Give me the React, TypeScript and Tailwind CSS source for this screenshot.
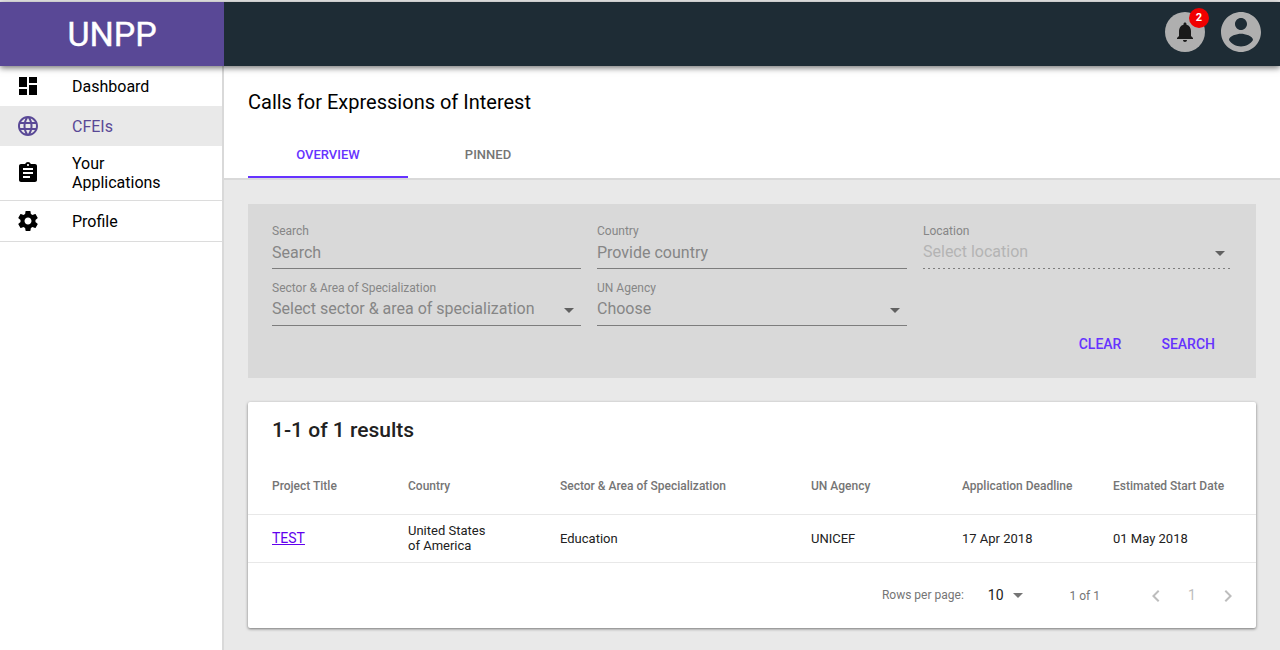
import type { ReactNode } from "react";

const PATHS = {
  dashboard: "M3 13h8V3H3v10zm0 8h8v-6H3v6zm10 0h8V11h-8v10zm0-18v6h8V3h-8z",
  language:
    "M11.99 2C6.47 2 2 6.48 2 12s4.47 10 9.99 10C17.52 22 22 17.52 22 12S17.52 2 11.99 2zm6.93 6h-2.95c-.32-1.25-.78-2.45-1.38-3.56 1.84.63 3.37 1.91 4.33 3.56zM12 4.04c.83 1.2 1.48 2.53 1.91 3.96h-3.82c.43-1.43 1.08-2.76 1.91-3.96zM4.26 14C4.1 13.36 4 12.69 4 12s.1-1.36.26-2h3.38c-.08.66-.14 1.32-.14 2 0 .68.06 1.34.14 2H4.26zm.82 2h2.95c.32 1.25.78 2.45 1.38 3.56-1.84-.63-3.37-1.9-4.33-3.56zm2.95-8H5.08c.96-1.66 2.49-2.93 4.33-3.56C8.81 5.55 8.35 6.75 8.03 8zM12 19.96c-.83-1.2-1.48-2.53-1.91-3.96h3.82c-.43 1.43-1.08 2.76-1.91 3.96zM14.34 14H9.66c-.09-.66-.16-1.32-.16-2 0-.68.07-1.35.16-2h4.68c.09.65.16 1.32.16 2 0 .68-.07 1.34-.16 2zm.25 5.56c.6-1.11 1.06-2.31 1.38-3.56h2.95c-.96 1.65-2.49 2.93-4.33 3.56zM16.36 14c.08-.66.14-1.32.14-2 0-.68-.06-1.34-.14-2h3.38c.16.64.26 1.31.26 2s-.1 1.36-.26 2h-3.38z",
  assignment:
    "M19 3h-4.18C14.4 1.84 13.3 1 12 1c-1.3 0-2.4.84-2.82 2H5c-1.1 0-2 .9-2 2v14c0 1.1.9 2 2 2h14c1.1 0 2-.9 2-2V5c0-1.1-.9-2-2-2zm-7 0c.55 0 1 .45 1 1s-.45 1-1 1-1-.45-1-1 .45-1 1-1zm2 14H7v-2h7v2zm3-4H7v-2h10v2zm0-4H7V7h10v2z",
  settings:
    "M19.43 12.98c.04-.32.07-.64.07-.98s-.03-.66-.07-.98l2.11-1.65c.19-.15.24-.42.12-.64l-2-3.46c-.12-.22-.39-.3-.61-.22l-2.49 1c-.52-.4-1.08-.73-1.69-.98l-.38-2.65C14.46 2.18 14.25 2 14 2h-4c-.25 0-.46.18-.49.42l-.38 2.65c-.61.25-1.17.59-1.69.98l-2.49-1c-.23-.09-.49 0-.61.22l-2 3.46c-.13.22-.07.49.12.64l2.11 1.65c-.04.32-.07.65-.07.98s.03.66.07.98l-2.11 1.65c-.19.15-.24.42-.12.64l2 3.46c.12.22.39.3.61.22l2.49-1c.52.4 1.08.73 1.69.98l.38 2.65c.03.24.24.42.49.42h4c.25 0 .46-.18.49-.42l.38-2.65c.61-.25 1.17-.59 1.69-.98l2.49 1c.23.09.49 0 .61-.22l2-3.46c.12-.22.07-.49-.12-.64l-2.11-1.65zM12 15.5c-1.93 0-3.5-1.57-3.5-3.5s1.57-3.5 3.5-3.5 3.5 1.57 3.5 3.5-1.57 3.5-3.5 3.5z",
  bell: "M12 22c1.1 0 2-.9 2-2h-4c0 1.1.89 2 2 2zm6-6v-5c0-3.07-1.64-5.64-4.5-6.32V4c0-.83-.67-1.5-1.5-1.5s-1.5.67-1.5 1.5v.68C7.63 5.36 6 7.92 6 11v5l-2 2v1h16v-1l-2-2z",
  caret: "M7 10l5 5 5-5z",
  left: "M15.41 7.41L14 6l-6 6 6 6 1.41-1.41L10.83 12z",
  right: "M10 6L8.59 7.41 13.17 12l-4.58 4.59L10 18l6-6z",
};

function Icon({ name, className = "size-6" }: { name: keyof typeof PATHS; className?: string }) {
  return (
    <svg viewBox="0 0 24 24" fill="currentColor" className={`shrink-0 ${className}`}>
      <path d={PATHS[name]} />
    </svg>
  );
}

function NavItem({ icon, active, children, className = "h-10" }: { icon: keyof typeof PATHS; active?: boolean; children: ReactNode; className?: string }) {
  return (
    <a className={`box-content flex items-center pl-4 ${active ? "bg-[#e9e9e9] text-[#594896]" : "text-black"} ${className}`}>
      <Icon name={icon} />
      <span className="ml-8 w-[110px] text-base leading-[19px]">{children}</span>
    </a>
  );
}

function Field({ label, placeholder, select, disabled }: { label: string; placeholder: string; select?: boolean; disabled?: boolean }) {
  return (
    <div className={`flex h-[57px] flex-col ${disabled ? "w-[309px]" : ""}`}>
      <div className="mt-[11px] h-4 text-xs leading-4 text-[#868686]">{label}</div>
      <div className={`flex h-[30px] justify-between border-b ${disabled ? "border-transparent text-[#b4b4b4]" : "border-[#7d7d7d] text-[#868686]"}`}>
        <span className={`text-base leading-5 ${select ? "pt-[3px]" : "pt-1"}`}>{placeholder}</span>
        {select && <Icon name="caret" className="mt-0.5 size-6 text-[#616161]" />}
      </div>
      {disabled && (
        <div className="-mt-px mr-0.5 h-px shrink-0 bg-[repeating-linear-gradient(to_right,#7d7d7d_0px,#7d7d7d_2px,transparent_2px,transparent_5px)]" />
      )}
    </div>
  );
}

const COLUMNS = ["Project Title", "Country", "Sector & Area of Specialization", "UN Agency", "Application Deadline", "Estimated Start Date"];
const GRID = "grid grid-cols-[136px_152px_251px_151px_151px_1fr] items-center border-b border-[#e8e8e8] pl-6";

export default function App() {
  return (
    <div className="flex h-[650px] w-[1280px] flex-col overflow-hidden bg-[#e9e9e9] pt-0.5 font-['Roboto',sans-serif] text-black">
      <header className="z-10 flex h-16 shrink-0 bg-[#1e2c35] shadow-[0_2px_6px_rgba(0,0,0,0.55)]">
        <div className="flex w-56 items-center justify-center bg-[#594896] text-[34px] text-white [-webkit-text-stroke:0.4px_white]">
          <span>UNPP</span>
        </div>
        <div className="flex flex-1 items-center justify-end gap-4 pr-[19px]">
          <button className="relative -mt-1 flex size-10 items-center justify-center rounded-full bg-[#afafaf] text-[#1a1a1a]">
            <Icon name="bell" />
            <span className="absolute -top-1 -right-1 flex size-5 items-center justify-center rounded-full bg-[#f00000] text-[11px] font-bold text-white">2</span>
          </button>
          <svg viewBox="2 2 20 20" className="-mt-1 size-10" fill="#afafaf">
            <path d="M12 2C6.48 2 2 6.48 2 12s4.48 10 10 10 10-4.480 10-10S17.520 2 12 2zm0 3c1.660 0 3 1.340 3 3s-1.340 3-3 3-3-1.340-3-3 1.340-3 3-3zm0 14.200c-2.500 0-4.710-1.280-6-3.220.03-1.990 4-3.080 6-3.080 1.990 0 5.970 1.090 6 3.080-1.290 1.940-3.500 3.220-6 3.220z" />
          </svg>
        </div>
      </header>
      <div className="flex min-h-0 flex-1">
        <nav className="w-56 shrink-0 border-r-2 border-[#d9d9d9] bg-white">
          <NavItem icon="dashboard">Dashboard</NavItem>
          <NavItem icon="language" active>CFEIs</NavItem>
          <NavItem icon="assignment" className="h-[54px] border-b border-[#dcdcdc]">Your Applications</NavItem>
          <NavItem icon="settings" className="h-10 border-b border-[#dcdcdc]">Profile</NavItem>
        </nav>
        <main className="flex min-w-0 flex-1 flex-col">
          <div className="h-[114px] shrink-0 border-b-2 border-[#d9d9d9] bg-white px-6">
            <h1 className="pt-6 text-xl leading-6">Calls for Expressions of Interest</h1>
            <div className="mt-4 flex h-12 text-[13px] font-medium">
              <div className="flex w-40 items-center justify-center border-b-2 border-[#6633ff] pt-1 text-[#6633ff]">OVERVIEW</div>
              <div className="flex w-40 items-center justify-center pt-0.5 text-[#757575]">PINNED</div>
            </div>
          </div>
          <section className="mx-6 mt-6 h-[174px] shrink-0 bg-[#d9d9d9] px-6 pt-2">
            <div className="grid grid-cols-[309px_310px_309px] gap-x-4">
              <Field label="Search" placeholder="Search" />
              <Field label="Country" placeholder="Provide country" />
              <Field label="Location" placeholder="Select location" select disabled />
              <Field label="Sector & Area of Specialization" placeholder="Select sector & area of specialization" select />
              <Field label="UN Agency" placeholder="Choose" select />
            </div>
            <div className="mt-1.5 flex justify-end gap-10 pr-[17px] text-sm leading-6 font-medium text-[#6633ff]">
              <button>CLEAR</button>
              <button>SEARCH</button>
            </div>
          </section>
          <section className="mx-6 mt-6 h-[226px] shrink-0 rounded-xs bg-white shadow-[0_1px_3px_rgba(0,0,0,0.5)]">
            <h2 className="h-14 px-6 pt-4 text-[21px] leading-6 font-medium text-[#212121]">1-1 of 1 results</h2>
            <div className={`${GRID} h-[57px] text-xs font-medium text-[#757575]`}>
              {COLUMNS.map((c) => (
                <span key={c}>{c}</span>
              ))}
            </div>
            <div className={`${GRID} h-12 text-[13px] leading-[15px] text-[#212121]`}>
              <a className="pb-0.5 text-sm text-[#6200ee] underline">TEST</a>
              <span className="w-20 pb-0.5">United States of America</span>
              <span>Education</span>
              <span>UNICEF</span>
              <span>17 Apr 2018</span>
              <span>01 May 2018</span>
            </div>
            <div className="flex h-[65px] items-center justify-end pr-4 text-xs text-[#757575]">
              <span className="pb-0.5">Rows per page:</span>
              <span className="ml-6 pb-0.5 text-sm text-[#212121]">10</span>
              <Icon name="caret" className="-mt-0.5 ml-0.5 size-6 text-[#757575]" />
              <span className="ml-10">1 of 1</span>
              <Icon name="left" className="ml-11 size-6 text-[#bdbdbd]" />
              <span className="w-12 pb-0.5 text-center text-sm text-[#bdbdbd]">1</span>
              <Icon name="right" className="size-6 text-[#bdbdbd]" />
            </div>
          </section>
        </main>
      </div>
    </div>
  );
}
